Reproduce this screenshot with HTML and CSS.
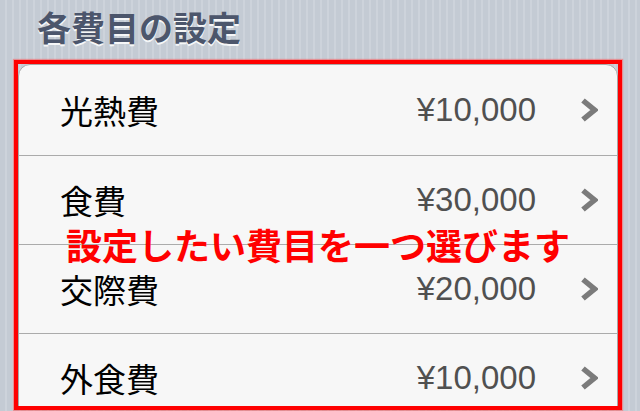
FILE: index.html
```html
<!DOCTYPE html>
<html lang="ja">
<head>
<meta charset="utf-8">
<title>各費目の設定</title>
<link rel="stylesheet" href="styles.css">
</head>
<body>
<div class="screen">
  <h1 class="section-title">各費目の設定</h1>
  <div class="highlight">
    <ul class="card">
      <li class="row"><span class="label">光熱費</span><span class="value">¥10,000</span><svg class="chev" viewBox="0 0 18 24" width="18" height="24"><polyline points="3,2.5 14.5,12 3,21.5"/></svg></li>
      <li class="row"><span class="label">食費</span><span class="value">¥30,000</span><svg class="chev" viewBox="0 0 18 24" width="18" height="24"><polyline points="3,2.5 14.5,12 3,21.5"/></svg></li>
      <li class="row"><span class="label">交際費</span><span class="value">¥20,000</span><svg class="chev" viewBox="0 0 18 24" width="18" height="24"><polyline points="3,2.5 14.5,12 3,21.5"/></svg></li>
      <li class="row"><span class="label">外食費</span><span class="value">¥10,000</span><svg class="chev" viewBox="0 0 18 24" width="18" height="24"><polyline points="3,2.5 14.5,12 3,21.5"/></svg></li>
    </ul>
    <div class="note">設定したい費目を一つ選びます</div>
  </div>
</div>
</body>
</html>
```
FILE: styles.css
```css
html, body {
  margin: 0;
  padding: 0;
}
body {
  width: 640px;
  height: 411px;
  overflow: hidden;
  background: repeating-linear-gradient(90deg, #c4cbd4 0, #c4cbd4 5px, #cdd3db 5px, #cdd3db 7px);
  font-family: "Noto Sans CJK JP", "Liberation Sans", sans-serif;
}
.screen {
  padding: 7px 0 0 14px;
}
.section-title {
  margin: 0 0 13px 0;
  padding-left: 23px;
  height: 40px;
  line-height: 40px;
  font-size: 34px;
  font-weight: 700;
  color: #4c566c;
  text-shadow: 0 1.5px 0 rgba(255,255,255,0.85);
}
.highlight {
  position: relative;
  width: 600px;
  height: 342px;
  border: 4px solid #ff0000;
  box-shadow: 0 0 1px 1px rgba(255,80,80,0.5);
  overflow: hidden;
}
.card {
  list-style: none;
  margin: 0;
  padding: 0;
  background: #f7f7f7;
  border: 1px solid #a8a8a8;
  border-radius: 12px 12px 0 0;
}
.row {
  display: flex;
  align-items: center;
  height: 88px;
  padding: 0 19px 0 41px;
  border-top: 1px solid #ababab;
}
.row:first-child {
  border-top: none;
  height: 90px;
}
.label {
  flex: 1;
  font-size: 33px;
  color: #000;
}
.value {
  font-family: "Liberation Sans", Arial, sans-serif;
  font-size: 33px;
  color: #505050;
  margin-right: 44px;
}
.chev {
  display: block;
}
.chev polyline {
  fill: none;
  stroke: #7b7b7b;
  stroke-width: 5.5;
  stroke-linejoin: miter;
  stroke-linecap: butt;
}
.note {
  position: absolute;
  left: 48px;
  top: 160px;
  font-size: 36px;
  line-height: 40px;
  font-weight: 700;
  color: #ff0000;
  white-space: nowrap;
}
```
